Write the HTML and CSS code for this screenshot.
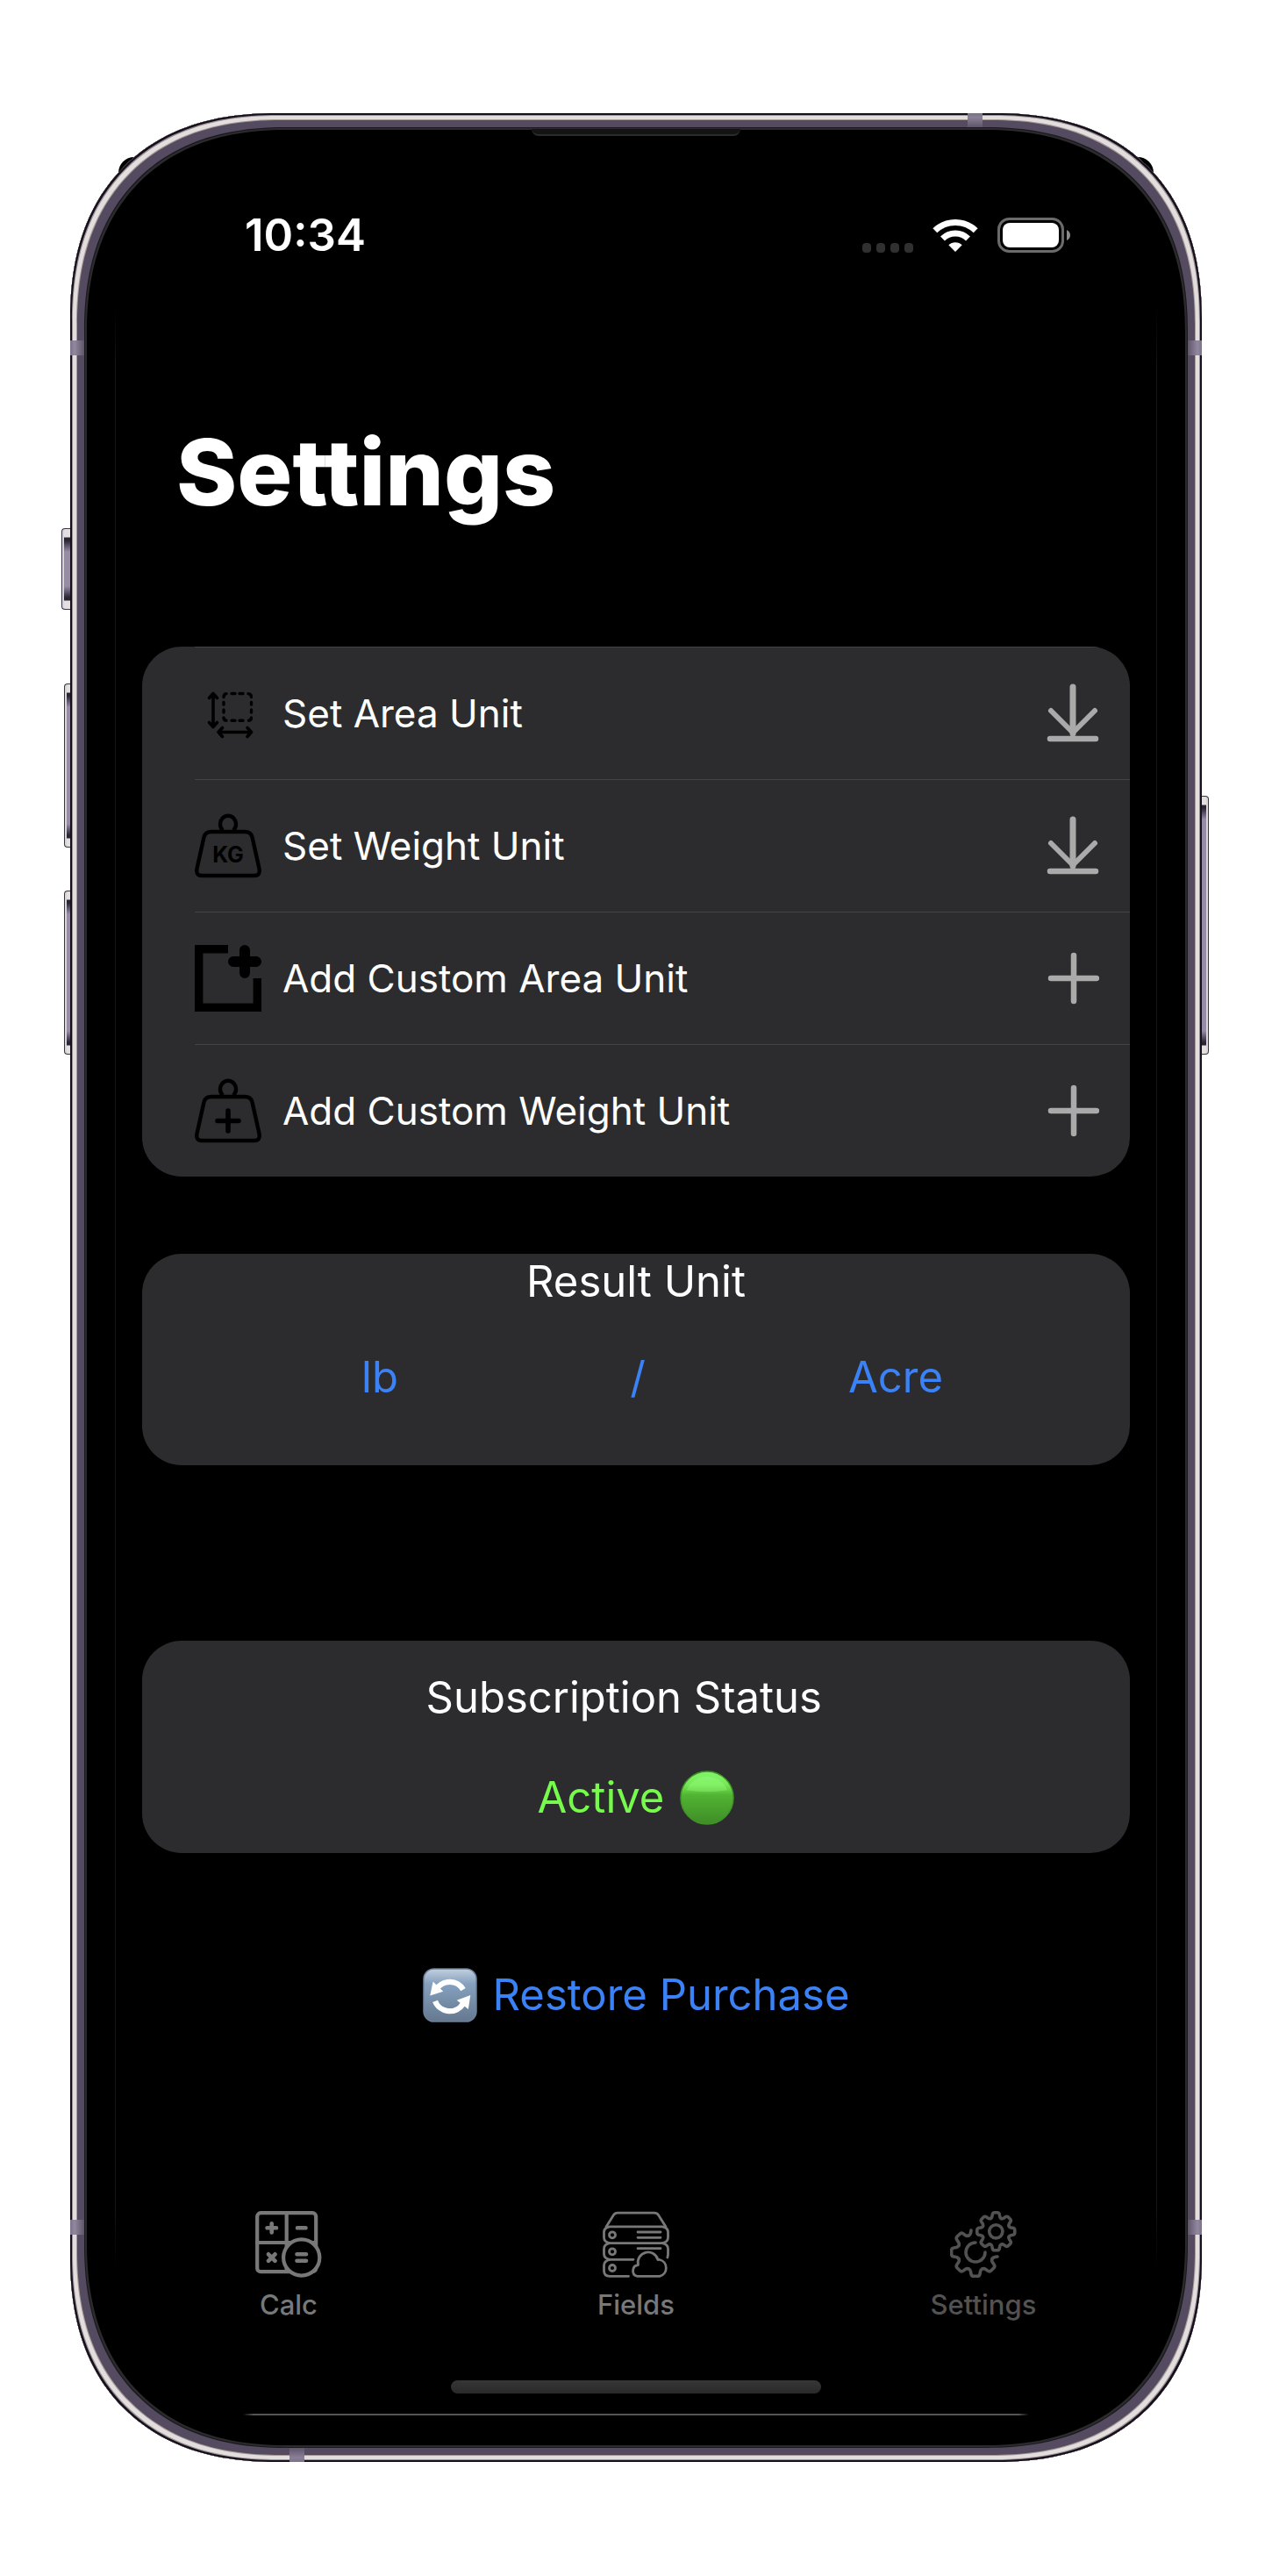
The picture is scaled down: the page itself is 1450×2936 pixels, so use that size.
FILE: index.html
```html
<!DOCTYPE html>
<html lang="en">
<head>
<meta charset="utf-8">
<meta name="viewport" content="width=device-width, initial-scale=1">
<title>Settings</title>
<link rel="stylesheet" href="styles.css">
</head>
<body>
<svg class="symbols" aria-hidden="true">
  <defs>
    <symbol id="download" viewBox="0 0 60 68">
      <g fill="none" stroke="currentColor" stroke-linecap="round" stroke-linejoin="round">
        <path d="M30 4V57" stroke-width="7"/>
        <path d="M5 31L30 56L55 31" stroke-width="6"/>
        <path d="M4 63H56" stroke-width="6.500"/>
      </g>
    </symbol>
    <symbol id="plus" viewBox="0 0 60 68">
      <path d="M31 8V60M5 34H57" fill="none" stroke="currentColor" stroke-width="6.500" stroke-linecap="round"/>
    </symbol>
    <symbol id="weight" viewBox="0 0 76 76">
      <g fill="none" stroke="currentColor" stroke-width="4.4" stroke-linejoin="round">
        <path d="M32 20.5A9 9.6 0 1 1 44 20.5"/>
        <path d="M19 22H57Q64 22 65.500 28L73.500 64Q75 72 68 72H8Q1 72 2.500 64L10.500 28Q12 22 19 22Z"/>
      </g>
    </symbol>
    <path id="tooth-small" d="M-6.100-14.800Q-4.600-15.500-4.400-17L-4-19.300Q-3.600-21.500-1.500-21.500H1.500Q3.600-21.500 4-19.300L4.400-17Q4.600-15.500 6.100-14.800"/>
    <path id="tooth-large" d="M-7.800-18.900Q-5.900-19.800-5.600-21.700L-5-24.900Q-4.600-27.400-2-27.400H2Q4.600-27.400 5-24.900L5.600-21.700Q5.900-19.800 7.800-18.900"/>
    <linearGradient id="green" x1="0" y1="0" x2="0" y2="1">
      <stop offset="0" stop-color="#83f36b"/><stop offset=".25" stop-color="#75ea55"/><stop offset=".45" stop-color="#51b433"/><stop offset="1" stop-color="#3f8c27"/>
    </linearGradient>
    <linearGradient id="steel" x1="0" y1="0" x2="0" y2="1">
      <stop offset="0" stop-color="#c3d0df"/><stop offset=".28" stop-color="#86a1bf"/><stop offset="1" stop-color="#65788f"/>
    </linearGradient>
  </defs>
</svg>

<div class="page">
<div class="phone">
  <span class="side-key mute"></span>
  <span class="side-key volume-up"></span>
  <span class="side-key volume-down"></span>
  <span class="side-key power"></span>
  <span class="antenna left upper"></span>
  <span class="antenna left lower"></span>
  <span class="antenna right upper"></span>
  <span class="antenna right lower"></span>
  <span class="antenna top"></span>
  <span class="antenna bottom"></span>
  <span class="speaker"></span>
  <span class="edge edge-left"></span>
  <span class="edge edge-right"></span>

  <header class="status-bar">
    <time class="clock">10:34</time>
    <div class="indicators">
      <span class="signal"><i></i><i></i><i></i><i></i></span>
      <svg class="wifi" viewBox="0 0 52 38" aria-label="Wi-Fi">
        <g fill="none" stroke="#fff" stroke-width="7">
          <path d="M2.800 13.800A33.500 33.500 0 0 1 49.200 13.800"/>
          <path d="M11.500 23A20.500 20.500 0 0 1 40.500 23"/>
        </g>
        <path d="M26 38L18.300 30.300A11 11 0 0 1 33.700 30.300Z" fill="#fff"/>
      </svg>
      <svg class="battery" viewBox="0 0 84 40" aria-label="Battery">
        <rect x="1.500" y="1.500" width="73" height="37" rx="12" fill="none" stroke="#6b6b6b" stroke-width="3"/>
        <rect x="6" y="6" width="64" height="28" rx="8" fill="#fff"/>
        <path d="M79 14Q83 16 83 20T79 26Z" fill="#8a8a8a"/>
      </svg>
    </div>
  </header>

  <main class="screen">
    <h1 class="title">Settings</h1>

    <ul class="card unit-list">
      <li><button class="unit-row" type="button">
        <svg class="row-icon" viewBox="0 0 76 76" aria-hidden="true">
          <g fill="none" stroke="#000" stroke-linecap="round" stroke-linejoin="round">
            <path d="M21 16V53M16.500 20.500L21 15.500L25.500 20.500M16.500 48.500L21 53.500L25.500 48.500" stroke-width="3.600"/>
            <path d="M27 59.500H64M31.500 54.500L27 59.500L31.500 64.500M60 54.500L64.500 59.500L60 64.500" stroke-width="3.600"/>
            <path d="M33 19.500Q33 16 36 15.600M42 15.500H46M51 15.500H55M61 15.600Q64.500 16 64.500 19.500M64.500 25.500V28M64.500 34V37M64.500 43Q64.500 46 61.500 46.200M55 46.300H51M46 46.300H42M36 46.200Q33 46 33 43M33 37V34M33 28V25.500" stroke-width="3.400"/>
          </g>
        </svg>
        <span class="row-label">Set Area Unit</span>
        <svg class="action-icon" aria-hidden="true"><use href="#download"/></svg>
      </button></li>
      <li><button class="unit-row" type="button">
        <svg class="row-icon" viewBox="0 0 76 76" aria-hidden="true">
          <use href="#weight"/>
          <text class="kg" x="38" y="57" text-anchor="middle">KG</text>
        </svg>
        <span class="row-label">Set Weight Unit</span>
        <svg class="action-icon" aria-hidden="true"><use href="#download"/></svg>
      </button></li>
      <li><button class="unit-row" type="button">
        <svg class="row-icon" viewBox="0 0 76 76" aria-hidden="true">
          <path d="M38 4.700H4.700V71.300H71.300V38" fill="none" stroke="#000" stroke-width="9.400"/>
          <path d="M57 6V32M44 19H70" stroke="#000" stroke-width="12" stroke-linecap="round"/>
        </svg>
        <span class="row-label">Add Custom Area Unit</span>
        <svg class="action-icon" aria-hidden="true"><use href="#plus"/></svg>
      </button></li>
      <li><button class="unit-row" type="button">
        <svg class="row-icon" viewBox="0 0 76 76" aria-hidden="true">
          <use href="#weight"/>
          <path d="M38 38V61M26 49.500H50" stroke="#000" stroke-width="5.600" stroke-linecap="round"/>
        </svg>
        <span class="row-label">Add Custom Weight Unit</span>
        <svg class="action-icon" aria-hidden="true"><use href="#plus"/></svg>
      </button></li>
    </ul>

    <section class="card result-card">
      <h2 class="card-title">Result Unit</h2>
      <div class="ratio">
        <button class="link-button" type="button">lb</button>
        <span>/</span>
        <button class="link-button" type="button">Acre</button>
      </div>
    </section>

    <section class="card status-card">
      <h2 class="card-title">Subscription Status&nbsp;&nbsp;</h2>
      <p class="active">Active
        <svg class="emoji" viewBox="0 0 64 64" aria-hidden="true">
          <circle cx="32" cy="32" r="31" fill="url(#green)" stroke="#3f9427" stroke-width="1.500"/>
          <path d="M8 23A26 26 0 0 1 56 23Q32 27 8 23Z" fill="#9bff84" opacity=".35"/>
        </svg>
      </p>
    </section>

    <button class="link-button restore" type="button">
      <svg class="emoji" viewBox="0 0 64 64" aria-hidden="true">
        <rect x="1" y="1" width="62" height="62" rx="12" fill="url(#steel)" stroke="#6c8099" stroke-width="1.500"/>
        <g fill="none" stroke="#fff" stroke-width="6.500">
          <path d="M16 25A18.500 18.500 0 0 1 47.500 25.500"/>
          <path d="M14.500 39A18.500 18.500 0 0 0 47.500 42"/>
        </g>
        <path d="M12 16L8.500 32.500L24 27.500Z" fill="#fff"/>
        <path d="M56 32L53.500 48.500L40 38Z" fill="#fff"/>
      </svg>
      Restore Purchase
    </button>
  </main>

  <nav class="tab-bar">
    <a class="tab" href="#calc">
      <svg class="tab-icon" viewBox="0 0 76 76" aria-hidden="true">
        <g fill="none" stroke="currentColor" stroke-width="4.200" stroke-linecap="round">
          <rect x="2.200" y="2.200" width="67" height="67" rx="4"/>
          <path d="M35.700 2V69M2 36H69"/>
          <path d="M18.700 14.200V24.500M13.500 19.300H24M48 19.300H57.500M15 49.300L22.500 56.800M22.500 49.300L15 56.800" stroke-width="4.600"/>
          <circle cx="52.700" cy="53" r="20.600" fill="#000"/>
          <path d="M47.500 49.200H58M47.500 56.800H58" stroke-width="4.600"/>
        </g>
      </svg>
      <span>Calc</span>
    </a>
    <a class="tab" href="#fields">
      <svg class="tab-icon" viewBox="0 0 76 76" aria-hidden="true">
        <g fill="none" stroke="currentColor" stroke-width="2.800" stroke-linecap="round" stroke-linejoin="round">
          <path d="M4 18L12.500 4.500Q14 2.200 17 2.200H59Q62 2.200 63.500 4.500L72 18"/>
          <path d="M8 17.800H68Q74.500 19 74.500 24V30Q74.500 35.500 68 36.700H8Q1.500 35.500 1.500 30V24Q1.500 19 8 17.800Z"/>
          <path d="M8 36.700Q1.500 38 1.500 43V49Q1.500 54 8 55.300H35M68 36.700Q74.500 38 74.500 43V49Q74.500 51 73.800 53"/>
          <path d="M8 55.300Q1.500 57 1.500 62V68Q1.500 74.300 8 74.300H29.500"/>
          <circle cx="11" cy="27.300" r="3.500"/><circle cx="11" cy="46.300" r="3.500"/><circle cx="11" cy="65" r="3.500"/>
          <path d="M40 24H66M40 30.300H66M40 42.700H66"/>
          <path d="M39 74.300H65A9.700 9.700 0 0 0 65 55.500Q64 55.300 63 55.600A11.500 11.500 0 0 0 40.500 61.500A6.600 6.600 0 0 0 39 74.300Z"/>
        </g>
      </svg>
      <span>Fields</span>
    </a>
    <a class="tab current" href="#settings" aria-current="page">
      <svg class="tab-icon" viewBox="0 0 76 76" aria-hidden="true">
        <g fill="none" stroke="currentColor" stroke-width="3.600" stroke-linecap="round" stroke-linejoin="round">
          <g transform="translate(52.300 23.300)">
            <use href="#tooth-small"/><use href="#tooth-small" transform="rotate(45)"/><use href="#tooth-small" transform="rotate(90)"/><use href="#tooth-small" transform="rotate(135)"/><use href="#tooth-small" transform="rotate(180)"/><use href="#tooth-small" transform="rotate(225)"/><use href="#tooth-small" transform="rotate(270)"/><use href="#tooth-small" transform="rotate(315)"/>
            <circle r="7.600"/>
          </g>
          <g transform="translate(29 47)">
            <use href="#tooth-large" transform="rotate(135)"/><use href="#tooth-large" transform="rotate(180)"/><use href="#tooth-large" transform="rotate(225)"/><use href="#tooth-large" transform="rotate(270)"/><use href="#tooth-large" transform="rotate(315)"/>
            <path d="M-7.800-18.900Q-5.900-19.800-5.600-21.700L-5-24.900M18.900 7.800Q19.800 5.900 21.700 5.600L24.900 5"/>
            <path d="M0-11A11 11 0 1 0 11 0"/>
          </g>
        </g>
      </svg>
      <span>Settings</span>
    </a>
  </nav>
  <div class="home-bar"></div>
  <div class="bottom-edge"></div>
</div>
</div>
</body>
</html>
```
FILE: styles.css
```css
* { box-sizing: border-box; }

body {
  margin: 0;
  background: #fff;
  color: #fff;
  font-family: Inter, "Liberation Sans", sans-serif;
}

h1, h2, p, ul { margin: 0; padding: 0; }
button { font: inherit; color: inherit; background: none; border: 0; padding: 0; cursor: pointer; }
svg { display: block; flex: none; }
.symbols { position: absolute; width: 0; height: 0; }

.page { isolation: isolate; padding: 129px 80px 130px; }

/* Device body */
.phone {
  position: relative;
  display: flex;
  flex-direction: column;
  padding: 100px 51px 53px;
  border-radius: 210px;
  background: #000;
  box-shadow:
    inset 0 0 0 2px #15101c,
    inset 0 0 0 3px #9b8f92,
    inset 0 0 0 7px #e2dedd,
    inset 0 0 0 8px #a99b99,
    inset 0 0 0 16px #544b60,
    inset 0 0 0 17px #1b1820,
    inset 0 0 0 19px #2b2b2b;
}
@supports (corner-shape: superellipse(1.2)) {
  .phone { border-radius: 235px; corner-shape: superellipse(1.2); }
}

/* Display panel corners showing past the body curve */
.phone::before {
  content: "";
  position: absolute;
  z-index: -1;
  top: 50px;
  left: 55px;
  right: 55px;
  height: 200px;
  border-radius: 18px;
  background: #000;
}

.side-key {
  position: absolute;
  left: -7px;
  width: 7px;
  height: 187px;
  border: 1px solid #3a3344;
  border-right: 0;
  border-radius: 4px 0 0 4px;
  background: linear-gradient(#e4e0e0 0 9px, #2a2433 10px 13px, #978ca6 26px calc(100% - 26px), #2a2433 calc(100% - 13px) calc(100% - 10px), #e4e0e0 calc(100% - 9px));
  box-shadow: inset 2px 0 #d8d4da;
}
.mute { top: 473px; left: -10px; width: 10px; height: 93px; }
.volume-up { top: 650px; }
.volume-down { top: 886px; }
.power {
  top: 778px;
  left: auto;
  right: -8px;
  width: 8px;
  height: 295px;
  border: 1px solid #3a3344;
  border-left: 0;
  border-radius: 0 4px 4px 0;
  box-shadow: inset -2px 0 #d8d4da;
}

.antenna { position: absolute; background: #776c85; }
.left, .right { width: 16px; height: 17px; }
.left { left: 0; background: linear-gradient(90deg, #7b7088, #9289a0 30%, #5e556a); }
.right { right: 0; background: linear-gradient(270deg, #7b7088, #9289a0 30%, #5e556a); }
.upper { top: 259px; }
.lower { bottom: 259px; }
.top, .bottom { width: 17px; height: 16px; }
.top { top: 0; right: 250px; background: linear-gradient(#7b7088, #8a8098 30%, #5e556a); }
.bottom { bottom: 0; left: 250px; background: linear-gradient(#5e556a, #8a8098 70%, #7b7088); }

.speaker {
  position: absolute;
  top: 18px;
  left: 50%;
  width: 238px;
  height: 8px;
  margin-left: -119px;
  border-bottom: 2px solid #2b2b2b;
  border-radius: 0 0 8px 8px;
  background: #141414;
}

.edge {
  position: absolute;
  top: 216px;
  bottom: 216px;
  width: 1px;
  background: linear-gradient(transparent, #161616 80px calc(100% - 80px), transparent);
}
.edge-left { left: 51px; }
.edge-right { right: 51px; }

/* Status bar */
.status-bar {
  display: flex;
  align-items: center;
  justify-content: space-between;
  height: 78px;
  padding: 0 98px 0 148px;
}
.clock { font-size: 51px; font-weight: 600; line-height: 60px; }
.indicators { display: flex; align-items: center; gap: 22px; }
.signal { display: flex; align-self: flex-end; gap: 6px; }
.signal i { width: 10px; height: 11px; border-radius: 4px; background: #303030; }
.wifi { width: 52px; height: 38px; }
.battery { width: 84px; height: 40px; }

/* Settings content */
.screen {
  display: flex;
  flex-direction: column;
  padding: 171px 31px 0;
}
.title {
  padding-left: 39px;
  font-size: 105px;
  font-weight: 800;
  line-height: 120px;
}
.card { border-radius: 45px; background: #2c2c2e; overflow: hidden; }

.unit-list { margin-top: 139px; padding-left: 60px; list-style: none; }
.unit-list li { height: 151px; border-top: 1px solid #434345; }
.unit-row {
  display: flex;
  align-items: center;
  gap: 24px;
  width: 100%;
  height: 100%;
  padding-right: 35px;
  font-size: 44px;
  line-height: 56px;
  text-align: left;
}
.row-label { flex: 1; }
.row-icon { width: 76px; height: 76px; color: #000; }
.kg { font-size: 25px; font-weight: 700; fill: #000; }
.action-icon { width: 60px; height: 68px; color: #aaa; }

.card-title { font-size: 49px; font-weight: 400; line-height: 60px; text-align: center; }
.link-button { color: #3b82f6; }

.result-card { margin-top: 88px; padding: 2px 120px 52px 124px; font-size: 49px; line-height: 60px; }
.result-card .card-title { margin-right: 4px; }
.ratio {
  display: grid;
  grid-template-columns: repeat(3, 1fr);
  margin-top: 49px;
  padding-bottom: 18px;
  text-align: center;
  color: #3b82f6;
}

.status-card { margin-top: 200px; padding: 35px 40px 31px; }
.active {
  display: flex;
  align-items: center;
  justify-content: center;
  gap: 18px;
  margin-top: 52px;
  color: #76fa4c;
  font-size: 49px;
  line-height: 64px;
}
.emoji { width: 62px; height: 62px; }

.restore {
  display: flex;
  align-items: center;
  align-self: center;
  gap: 18px;
  margin-top: 130px;
  font-size: 49px;
  line-height: 64px;
}

/* Tab bar */
.tab-bar { display: grid; grid-template-columns: repeat(3, 1fr); margin-top: 214px; }
.tab {
  display: flex;
  flex-direction: column;
  align-items: center;
  gap: 13px;
  color: #787878;
  font-size: 31px;
  font-weight: 500;
  line-height: 36px;
  text-decoration: none;
}
.tab.current { color: #525252; }
.tab-icon { width: 76px; height: 76px; }

.home-bar {
  align-self: center;
  width: 422px;
  height: 15px;
  margin-top: 68px;
  border-radius: 8px;
  background: linear-gradient(#363636, #2a2a2a);
}
.bottom-edge {
  height: 2px;
  margin: 23px 146px 0;
  background: linear-gradient(90deg, transparent, #555 12px calc(100% - 12px), transparent);
}
```
